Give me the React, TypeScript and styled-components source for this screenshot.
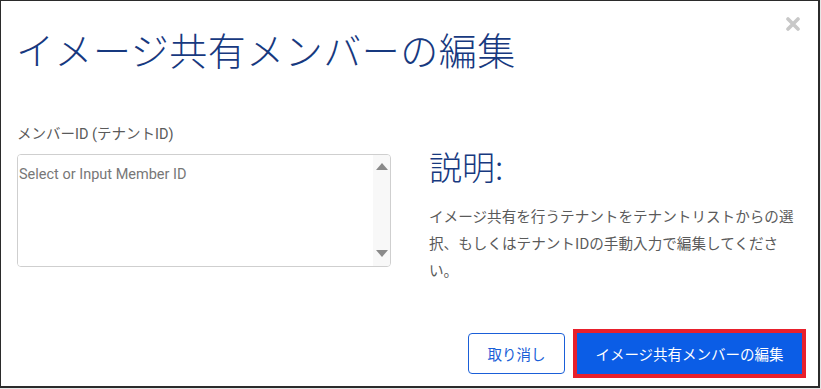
import styled, { createGlobalStyle } from 'styled-components';

const GlobalStyle = createGlobalStyle`
    html, body {
        margin: 0;
        padding: 0;
        background: #e6e6e6;
    }
    * {
        box-sizing: border-box;
    }
`;

const jp = `Roboto, "Noto Sans CJK JP", sans-serif`;

const Dialog = styled.div`
    width: 820px;
    height: 388px;
    background: #ffffff;
    border-style: solid;
    border-color: #2b2b2b;
    border-width: 1px 2px 2px 1px;
    display: flex;
    flex-direction: column;
    font-family: ${jp};
    position: relative;
`;

const Header = styled.header`
    padding: 19px 17px 0 15px;
    height: 112px;
`;

const Title = styled.h1`
    margin: 0;
    font-family: "Noto Sans CJK JP", sans-serif;
    font-weight: 300;
    font-size: 38px;
    line-height: 58px;
    color: #17397f;
    letter-spacing: 0.5px;
`;

const CloseButton = styled.button`
    position: absolute;
    top: 14px;
    right: 16px;
    border: none;
    background: none;
    padding: 0;
    width: 18px;
    height: 18px;
    display: flex;
    align-items: center;
    justify-content: center;
    cursor: pointer;
`;

const Body = styled.section`
    flex: 1;
    display: grid;
    grid-template-columns: 374px 1fr;
    column-gap: 38px;
    padding: 0 14px 0 16px;
`;

const Field = styled.div`
    display: flex;
    flex-direction: column;
    gap: 9px;
    padding-top: 11px;
`;

const Label = styled.label`
    font-family: ${jp};
    font-size: 14.5px;
    color: #5a5a5a;
    line-height: 21px;
`;

const InputBox = styled.div`
    height: 113px;
    border: 1px solid #cfcfcf;
    border-radius: 4px;
    display: flex;
    overflow: hidden;
`;

const Area = styled.textarea`
    flex: 1;
    border: none;
    outline: none;
    resize: none;
    padding: 9px 0 0 1px;
    font-family: Roboto, sans-serif;
    font-size: 14.5px;
    color: #333;
    line-height: 22px;

    &::placeholder {
        color: #777777;
    }
`;

const ScrollTrack = styled.div`
    width: 17px;
    background: #f8f8f8;
    display: flex;
    flex-direction: column;
    justify-content: space-between;
    align-items: center;
    padding: 8px 0 9px;
`;

const Arrow = styled.span<{ $down?: boolean }>`
    width: 0;
    height: 0;
    border-left: 6px solid transparent;
    border-right: 6px solid transparent;
    ${(p) =>
        p.$down
            ? 'border-top: 7px solid #8a8a8a;'
            : 'border-bottom: 7px solid #8a8a8a;'}
`;

const Help = styled.div`
    padding-top: 29px;
`;

const HelpTitle = styled.h2`
    margin: 0;
    font-family: "Noto Sans CJK JP", sans-serif;
    font-weight: 300;
    font-size: 33px;
    line-height: 48px;
    color: #17397f;
`;

const HelpText = styled.p`
    margin: 12px 0 0;
    font-family: "Noto Sans CJK JP", sans-serif;
    font-size: 14.6px;
    line-height: 27px;
    color: #5a5a5a;
    width: 372px;
`;

const Footer = styled.footer`
    display: flex;
    justify-content: flex-end;
    align-items: center;
    gap: 12px;
    padding: 0 16px 12px 0;
`;

const Button = styled.button<{ $primary?: boolean }>`
    height: 41px;
    border-radius: 4px;
    font-family: "Noto Sans CJK JP", sans-serif;
    font-size: 14.5px;
    cursor: pointer;
    padding: 0 16px;
    ${(p) =>
        p.$primary
            ? `
        background: #0b5de6;
        color: #ffffff;
        border: 1px solid #0b5de6;
        border-radius: 0;
        outline: 4px solid #e8202c;
        outline-offset: 0;
        width: 225px;
    `
            : `
        background: #ffffff;
        color: #1a5fd8;
        border: 1px solid #1a5fd8;
        width: 97px;
    `}
`;

export default function App() {
    return (
        <>
            <GlobalStyle />
            <Dialog>
                <CloseButton aria-label="close">
                    <svg width="14" height="14" viewBox="0 0 14 14">
                        <path
                            d="M2 2 L12 12 M12 2 L2 12"
                            stroke="#c8c8c8"
                            strokeWidth="3.6"
                            strokeLinecap="round"
                        />
                    </svg>
                </CloseButton>
                <Header>
                    <Title>イメージ共有メンバーの編集</Title>
                </Header>
                <Body>
                    <Field>
                        <Label>メンバーID (テナントID)</Label>
                        <InputBox>
                            <Area placeholder="Select or Input Member ID" />
                            <ScrollTrack>
                                <Arrow />
                                <Arrow $down />
                            </ScrollTrack>
                        </InputBox>
                    </Field>
                    <Help>
                        <HelpTitle>説明:</HelpTitle>
                        <HelpText>
                            イメージ共有を行うテナントをテナントリストからの選択、もしくはテナントIDの手動入力で編集してください。
                        </HelpText>
                    </Help>
                </Body>
                <Footer>
                    <Button>取り消し</Button>
                    <Button $primary>イメージ共有メンバーの編集</Button>
                </Footer>
            </Dialog>
        </>
    );
}
